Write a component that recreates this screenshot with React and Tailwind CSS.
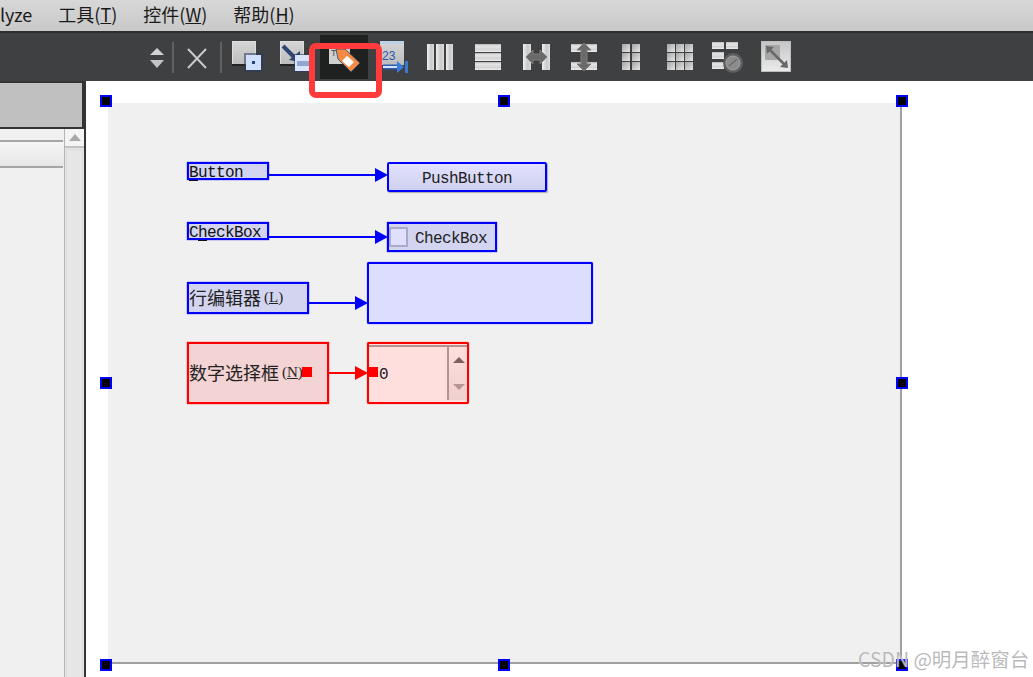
import React from "react";

const cjk = "font-['Noto_Sans_CJK_SC','Noto_Sans',sans-serif]";
const mono = "font-['Liberation_Mono','Noto_Sans_CJK_SC',monospace] text-[16px] tracking-[-0.6px]";
const serif = "font-['Liberation_Serif',serif] text-[15px] tracking-normal";

function Defs() {
  return (
    <svg className="absolute w-0 h-0">
      <defs>
        <linearGradient id="sq" x1="0" y1="0" x2="0" y2="1">
          <stop offset="0" stopColor="#d6d6d6" />
          <stop offset="1" stopColor="#bcbcbc" />
        </linearGradient>
        <linearGradient id="hb" x1="0" y1="0" x2="0" y2="1">
          <stop offset="0" stopColor="#b4b4b4" />
          <stop offset="0.25" stopColor="#e6e6e6" />
          <stop offset="0.7" stopColor="#d2d2d2" />
          <stop offset="1" stopColor="#efefef" />
        </linearGradient>
        <linearGradient id="vb" x1="0" y1="0" x2="1" y2="0">
          <stop offset="0" stopColor="#efefef" />
          <stop offset="0.6" stopColor="#c8c8c8" />
          <stop offset="1" stopColor="#dedede" />
        </linearGradient>
        <linearGradient id="cell" x1="0" y1="0" x2="1" y2="1">
          <stop offset="0" stopColor="#a4a4a4" />
          <stop offset="1" stopColor="#e6e6e6" />
        </linearGradient>
        <linearGradient id="adj" x1="0" y1="0" x2="0" y2="1">
          <stop offset="0" stopColor="#c6c6c6" />
          <stop offset="1" stopColor="#eaeaea" />
        </linearGradient>
      </defs>
    </svg>
  );
}

function Sort() {
  return (
    <svg width="16" height="48" className="ml-[149px] shrink-0">
      <path d="M8 15 L15 22 L1 22 Z" fill="#d2d2d2" />
      <path d="M1 27 L15 27 L8 35 Z" fill="#c4c4c4" />
    </svg>
  );
}

function Divider({ cls }) {
  return <div className={`w-[2px] h-[31px] bg-[#606264] shrink-0 ${cls}`} />;
}

function Cross() {
  return (
    <svg width="22" height="48" className="ml-[12px] shrink-0">
      <path d="M2 16 L20 35 M20 16 L2 35" stroke="#c9c9c9" strokeWidth="2" />
    </svg>
  );
}

function IconA() {
  return (
    <svg width="32" height="48" className="ml-[10px] shrink-0">
      <rect x="0.5" y="8.5" width="23" height="23" fill="url(#sq)" stroke="#dedede" />
      <rect x="0" y="31" width="24" height="2" fill="#232323" />
      <rect x="12" y="20" width="19" height="19" fill="#2b3b5c" opacity="0.55" />
      <rect x="14" y="22" width="15" height="15" fill="#cfe0ff" />
      <rect x="20" y="28" width="3" height="3" fill="#23407a" />
    </svg>
  );
}

function IconB() {
  return (
    <svg width="32" height="48" className="ml-[16px] shrink-0">
      <rect x="0.5" y="8.5" width="23" height="23" fill="url(#sq)" stroke="#dedede" />
      <rect x="0" y="31" width="24" height="2" fill="#232323" />
      <path d="M3 13 L15 25" stroke="#2d4672" strokeWidth="4" />
      <path d="M9 27 L20 18 L20 29 Z" fill="#2d4672" />
      <rect x="14" y="21" width="18" height="18" fill="#2b3b5c" opacity="0.6" />
      <rect x="15" y="22" width="16" height="16" fill="#d9e5fb" />
      <rect x="17" y="28" width="12" height="5" fill="#8ea8d2" />
    </svg>
  );
}

function IconC() {
  return (
    <div className="ml-[8px] w-[48px] h-[44px] bg-[#1f2020] shrink-0 flex">
      <svg width="48" height="44">
        <rect x="9" y="13" width="21" height="16" fill="#d0d0d0" />
        <text x="11" y="21" fontSize="9" fill="#444" fontFamily="Liberation Sans">T</text>
        <path d="M16 14 L25 14 L40 28 L31 37 L18 24 Z" fill="#f58a45" stroke="#28406a" strokeWidth="0.8" strokeLinejoin="round" />
        <path d="M27 21 L34 27 L29 32 L22 26 Z" fill="#ffffff" />
      </svg>
    </div>
  );
}

function IconD() {
  return (
    <svg width="30" height="48" className="ml-[12px] shrink-0">
      <rect x="0" y="8" width="24" height="24" fill="url(#sq)" />
      <rect x="0" y="8" width="24" height="3" fill="#bcd0e8" />
      <text x="2" y="27" fontSize="12" fill="#2a56a8" fontFamily="Liberation Sans">23</text>
      <path d="M3 34 L18 34" stroke="#2d5fb0" strokeWidth="5" />
      <path d="M3 34 L18 34" stroke="#d5e4ff" strokeWidth="2" />
      <path d="M17 28 L24 34 L17 40 Z" fill="#3b7ddd" />
      <rect x="25" y="28" width="3" height="12" fill="#3b78d0" />
    </svg>
  );
}

function Vbars() {
  return (
    <svg width="26" height="48" className="ml-[17px] shrink-0">
      <rect x="0" y="11" width="7" height="26" fill="url(#vb)" />
      <rect x="9" y="11" width="8" height="26" fill="url(#vb)" />
      <rect x="19" y="11" width="7" height="26" fill="url(#vb)" />
    </svg>
  );
}

function Hbars() {
  return (
    <svg width="26" height="48" className="ml-[22px] shrink-0">
      <rect x="0" y="11" width="26" height="8" fill="url(#hb)" />
      <rect x="0" y="20" width="26" height="8" fill="url(#hb)" />
      <rect x="0" y="29" width="26" height="8" fill="url(#hb)" />
    </svg>
  );
}

function HSplit() {
  return (
    <svg width="27" height="48" className="ml-[22px] shrink-0">
      <rect x="0" y="11" width="8" height="26" fill="url(#vb)" />
      <rect x="19" y="11" width="8" height="26" fill="url(#vb)" />
      <path d="M3 24 L10 17 L10 21 L17 21 L17 17 L24 24 L17 31 L17 27 L10 27 L10 31 Z" fill="#6a6a6a" stroke="#7d7d7d" strokeWidth="1" />
    </svg>
  );
}

function VSplit() {
  return (
    <svg width="26" height="48" className="ml-[21px] shrink-0">
      <rect x="0" y="11" width="26" height="8" fill="url(#hb)" />
      <rect x="0" y="29" width="26" height="8" fill="url(#hb)" />
      <path d="M13 10 L20 17 L16 17 L16 31 L20 31 L13 38 L6 31 L10 31 L10 17 L6 17 Z" fill="#6a6a6a" stroke="#7d7d7d" strokeWidth="1" />
    </svg>
  );
}

function Grid6() {
  const ys = [11, 20, 29];
  return (
    <svg width="18" height="48" className="ml-[25px] shrink-0">
      {ys.map((y) => (
        <g key={y}>
          <rect x="0" y={y} width="8" height="8" fill="url(#cell)" />
          <rect x="10" y={y} width="8" height="8" fill="url(#cell)" />
        </g>
      ))}
    </svg>
  );
}

function Grid9() {
  const ys = [11, 20, 29];
  const xs = [0, 9, 18];
  return (
    <svg width="26" height="48" className="ml-[27px] shrink-0">
      {ys.map((y) =>
        xs.map((x) => <rect key={`${x}-${y}`} x={x} y={y} width="8" height="8" fill="url(#cell)" />)
      )}
    </svg>
  );
}

function FormIcon() {
  return (
    <svg width="32" height="48" className="ml-[19px] shrink-0">
      <rect x="0" y="9" width="12" height="7" fill="url(#hb)" />
      <rect x="14" y="9" width="12" height="7" fill="url(#hb)" />
      <rect x="0" y="19" width="12" height="7" fill="url(#hb)" />
      <rect x="0" y="29" width="12" height="7" fill="url(#hb)" />
      <circle cx="21" cy="30" r="10" fill="#5f5f5f" />
      <circle cx="21" cy="30" r="7" fill="#8c8c8c" stroke="#a2a2a2" />
      <path d="M17 33 L25 26" stroke="#6a6a6a" strokeWidth="1.5" />
    </svg>
  );
}

function Adjust() {
  return (
    <svg width="30" height="48" className="ml-[17px] shrink-0">
      <rect x="0" y="8" width="30" height="31" fill="#bdbdbd" />
      <rect x="1" y="9" width="28" height="29" fill="url(#adj)" />
      <rect x="4" y="12" width="15" height="15" fill="#a6a6a6" />
      <path d="M8 16 L24 32" stroke="#686868" strokeWidth="2.5" />
      <path d="M5 13 L13 14 L6 21 Z" fill="#686868" />
      <path d="M27 35 L19 34 L26 27 Z" fill="#686868" />
    </svg>
  );
}

function Menu() {
  return (
    <div className={`h-[31px] shrink-0 pb-[3px] bg-gradient-to-b from-[#d8d8d8] to-[#c8c8c8] flex items-center text-[18px] text-[#1a1a1a] ${cjk}`}>
      <span>lyze</span>
      <span className="ml-[26px]">工具(<span className="underline">T</span>)</span>
      <span className="ml-[26px]">控件(<span className="underline">W</span>)</span>
      <span className="ml-[26px]">帮助(<span className="underline">H</span>)</span>
    </div>
  );
}

function Toolbar() {
  return (
    <div className="h-[50px] shrink-0 bg-[#3f4042] border-t-2 border-[#2d2d2d] flex items-center">
      <Sort />
      <Divider cls="ml-[7px]" />
      <Cross />
      <Divider cls="ml-[12px]" />
      <IconA />
      <IconB />
      <IconC />
      <IconD />
      <Vbars />
      <Hbars />
      <HSplit />
      <VSplit />
      <Grid6 />
      <Grid9 />
      <FormIcon />
      <Adjust />
    </div>
  );
}

function LeftPanel() {
  return (
    <div className="w-[86px] shrink-0 flex flex-col bg-[#333435] border-r-2 border-[#333435]">
      <div className="h-[2px] shrink-0" />
      <div className="h-[44px] w-[82px] shrink-0 bg-[#c0c0c0]" />
      <div className="h-[2px] shrink-0" />
      <div className="flex-1 flex">
        <div className="w-[64px] bg-[#f0f0f0] flex flex-col">
          <div className="h-[11px]" />
          <div className="h-[2px] bg-[#a5a5a5] mr-[1px]" />
          <div className="h-[24px] bg-gradient-to-b from-[#f6f6f6] to-[#e6e6e6]" />
          <div className="h-[2px] bg-[#a5a5a5] mr-[1px]" />
        </div>
        <div className="w-[20px] bg-[#e6e6e6] border-l border-[#b5b5b5] flex flex-col">
          <div className="h-[17px] bg-[#f4f4f4] flex items-center justify-center">
            <svg width="12" height="7">
              <path d="M6 0 L12 7 L0 7 Z" fill="#a9a9a9" />
            </svg>
          </div>
          <div className="h-[2px] bg-[#c2c2c2]" />
          <div className="flex-1 mx-[1px] mt-[1px] border-x border-t border-[#dcdcdc]" />
        </div>
      </div>
    </div>
  );
}

function Handle({ cls }) {
  return <div className={`absolute w-[12px] h-[12px] bg-black border-2 border-[#0000ff] ${cls}`} />;
}

function Arrow({ cls, color }) {
  return (
    <svg width="13" height="14" className={`absolute ${cls}`}>
      <path d="M0 0 L13 7 L0 14 Z" fill={color} />
    </svg>
  );
}

function Form() {
  const lbl = `absolute border-2 border-[#0000ff] bg-[#d3d5f0] leading-none text-[#111] pt-[1px] whitespace-nowrap shadow-[0_0_1px_#0000ff] ${mono}`;
  return (
    <div className="relative w-[794px] h-[561px] ml-[22px] mt-[22px] bg-[#f0f0f0] border-r-2 border-b-2 border-[#a0a0a0]">
      <Handle cls="left-[-8px] top-[-8px]" />
      <Handle cls="left-[390px] top-[-8px]" />
      <Handle cls="left-[788px] top-[-8px]" />
      <Handle cls="left-[-8px] top-[274px]" />
      <Handle cls="left-[788px] top-[274px]" />
      <Handle cls="left-[-8px] top-[556px]" />
      <Handle cls="left-[390px] top-[556px]" />
      <Handle cls="left-[788px] top-[556px]" />

      <div className={`${lbl} left-[79px] top-[59px] w-[82px] h-[18px]`}>
        <span className="underline underline-offset-[3px]">B</span>utton
      </div>
      <div className="absolute left-[161px] top-[71px] w-[106px] h-[2px] bg-[#0000ff]" />
      <Arrow cls="left-[267px] top-[65px]" color="#0000ff" />
      <div className={`absolute left-[279px] top-[59px] w-[160px] h-[30px] pt-[3px] border-2 border-[#0000ff] rounded-[2px] bg-gradient-to-b from-[#e2e2ff] to-[#cfd0ef] shadow-[1px_1px_1px_#aaa] flex items-center justify-center text-[#222] ${mono}`}>
        PushButton
      </div>

      <div className={`${lbl} left-[79px] top-[119px] w-[82px] h-[18px]`}>
        C<span className="underline underline-offset-[3px]">h</span>eckBox
      </div>
      <div className="absolute left-[161px] top-[133px] w-[106px] h-[2px] bg-[#0000ff]" />
      <Arrow cls="left-[267px] top-[127px]" color="#0000ff" />
      <div className={`absolute left-[279px] top-[119px] w-[110px] h-[30px] border-2 border-[#0000ff] bg-[#d3d5f0] flex items-center text-[#222] shadow-[0_0_1px_#0000ff] ${mono}`}>
        <div className="w-[19px] h-[20px] border-2 border-[#aaabc9] bg-[#e0e0fc] rounded-[1px]" />
        <span className="ml-[7px] pt-[3px]">CheckBox</span>
      </div>

      <div className={`absolute left-[79px] top-[179px] w-[122px] h-[32px] pb-[2px] border-2 border-[#0000ff] bg-[#d3d5f0] flex items-center text-[#222] whitespace-nowrap shadow-[0_0_1px_#0000ff] ${cjk}`}>
        <span className="text-[18px]">行编辑器</span>
        <span className={`ml-[3px] ${serif}`}>(<span className="underline">L</span>)</span>
      </div>
      <div className="absolute left-[201px] top-[199px] w-[46px] h-[2px] bg-[#0000ff]" />
      <Arrow cls="left-[247px] top-[193px]" color="#0000ff" />
      <div className="absolute left-[259px] top-[159px] w-[226px] h-[62px] border-2 border-[#0000ff] rounded-[2px] bg-[#dddeff] shadow-[0_0_1px_#0000ff]" />

      <div className={`absolute left-[79px] top-[239px] w-[142px] h-[62px] pb-[2px] border-2 border-[#ff0000] bg-[#f3d3d3] flex items-center text-[#222] whitespace-nowrap shadow-[0_0_1px_#ff0000] ${cjk}`}>
        <span className="text-[18px]">数字选择框</span>
        <span className={`ml-[3px] ${serif}`}>(<span className="underline">N</span>)</span>
      </div>
      <div className="absolute left-[221px] top-[269px] w-[26px] h-[2px] bg-[#ff0000]" />
      <Arrow cls="left-[247px] top-[263px]" color="#ff0000" />
      <div className="absolute left-[259px] top-[239px] w-[102px] h-[62px] border-2 border-[#ff0000] rounded-[2px] bg-[#ffdede] shadow-[0_0_1px_#ff0000] flex flex-col">
        <div className="flex-1 flex mt-[1px] mb-[2px]">
          <div className={`flex-1 border-t-2 border-[#b89090] flex items-center pl-[10px] text-[#222] ${mono}`}>
            <span className="border-t-2 border-transparent">0</span>
          </div>
          <div className="w-[20px] border-t-2 border-l-2 border-[#b89090] bg-gradient-to-b from-[#ffdede] to-[#f0cfcf] flex flex-col items-center justify-around pl-[1px]">
            <svg width="12" height="6"><path d="M6 0 L12 6 L0 6 Z" fill="#7d5f5f" /></svg>
            <svg width="12" height="6"><path d="M0 0 L12 0 L6 6 Z" fill="#b89595" /></svg>
          </div>
        </div>
      </div>
      <div className="absolute left-[194px] top-[264px] w-[10px] h-[10px] bg-[#ff0000]" />
      <div className="absolute left-[260px] top-[264px] w-[10px] h-[10px] bg-[#ff0000]" />
    </div>
  );
}

export default function App() {
  return (
    <div className="relative w-[1033px] h-[677px] overflow-hidden bg-white flex flex-col">
      <Defs />
      <Menu />
      <Toolbar />
      <div className="flex-1 flex min-h-0">
        <LeftPanel />
        <div className="flex-1 bg-white">
          <Form />
        </div>
      </div>
      <div className="absolute left-[309px] top-[43px] w-[73px] h-[55px] border-[6px] border-[#ff3b3b] rounded-[7px]" />
      <div className={`absolute left-[858px] top-[644px] text-[19.5px] text-[#9a9a9a]/70 whitespace-nowrap [text-shadow:0_0_1px_#fff] ${cjk}`}>
        CSDN @明月醉窗台
      </div>
    </div>
  );
}
